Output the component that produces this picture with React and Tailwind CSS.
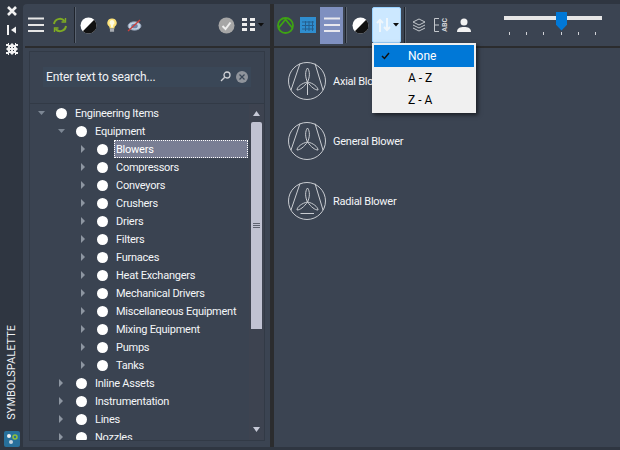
import React from 'react';

const font = { fontFamily: 'Roboto, "Open Sans", sans-serif' };

const children = ['Blowers', 'Compressors', 'Conveyors', 'Crushers', 'Driers', 'Filters', 'Furnaces', 'Heat Exchangers', 'Mechanical Drivers', 'Miscellaneous Equipment', 'Mixing Equipment', 'Pumps', 'Tanks'];
const siblings = ['Inline Assets', 'Instrumentation', 'Lines', 'Nozzles'];
const ticks = [0, 1, 2, 3, 4, 5];

function Arrow({ open }) {
    return open ? (
        <svg width="8" height="6" viewBox="0 0 8 6" className="shrink-0"><path d="M0 1h7L3.500 5z" fill="#7d8794" /></svg>
    ) : (
        <svg width="6" height="8" viewBox="0 0 6 8" className="shrink-0"><path d="M1 0v8l4-4z" fill="#8d96a1" /></svg>
    );
}

function TreeRow({ indent, label, open, selected }) {
    const pad = indent === 0 ? 'pl-[8px]' : indent === 1 ? 'pl-[28px]' : 'pl-[50px]';
    const gap = indent === 2 ? 'ml-[11px]' : open ? 'ml-[10px]' : 'ml-[12px]';
    return (
        <div className={`h-[18px] flex items-center shrink-0 ${pad}`}>
            <Arrow open={open} />
            <div className={`w-[11px] h-[11px] rounded-full bg-white shrink-0 ${gap}`}></div>
            {selected ? (
                <div className="ml-[6px] w-[134px] h-[18px] shrink-0 bg-[#797e94] border border-dotted border-white text-white text-[11px] tracking-[-0.25px] leading-[18px] pl-[1px]">{label}</div>
            ) : (
                <div className="ml-[8px] pt-[2px] text-[#f4f6f8] text-[11px] tracking-[-0.25px] leading-[18px] whitespace-nowrap">{label}</div>
            )}
        </div>
    );
}

function Hamburger({ color = '#e6e6e6' }) {
    return (
        <svg width="16" height="16" viewBox="0 0 16 16"><path d="M0 1.500h16M0 8h16M0 14h16" stroke={color} strokeWidth="2" /></svg>
    );
}

function HalfCircle() {
    return (
        <svg width="17" height="17" viewBox="0 0 17 17"><circle cx="8.500" cy="8.500" r="8" fill="#ffffff" /><path d="M14.200 2.800A8 8 0 0 1 2.800 14.200z" fill="#111111" /></svg>
    );
}

function Blower({ variant }) {
    return (
        <svg width="38" height="38" viewBox="0 0 38 38" className="shrink-0" fill="none" stroke="#c9ccd1" strokeWidth="1">
            <circle cx="19" cy="19" r="18.500" />
            <path d="M12 1.500L3 28M27 1.500L35 28" />
            <path d="M19.500 20C17 15 17 9 19.500 6C22 9 22 15 19.500 20Z" />
            <path d="M19.500 20C16 25 12 28 9 28C9 25 14 21 19.500 20Z" />
            <path d="M19.500 20C23 25 27 28 30 28C30 25 25 21 19.500 20Z" />
            {variant === 'axial' && <path d="M19.500 21V33" />}
            {variant === 'radial' && <path d="M12.500 31.500H26" />}
        </svg>
    );
}

function BlowerRow({ label, variant }) {
    return (
        <div className="h-[60px] flex items-center">
            <Blower variant={variant} />
            <span className="ml-[7px] pt-[2px] text-[11px] tracking-[-0.25px] text-[#f4f6f8] whitespace-nowrap">{label}</span>
        </div>
    );
}

function Separator({ className }) {
    return <div className={`w-[2px] h-[36px] bg-[#1f242c] border-r border-[#59626f] shrink-0 ${className}`}></div>;
}

function SortMenu() {
    return (
        <div className="absolute left-[372px] top-[43px] w-[104px] h-[70px] bg-[#f0f0f0] p-[2px] shadow-[2px_2px_4px_rgba(0,0,0,0.55)] z-10 text-[12px] text-black">
            <div className="h-[22px] bg-[#0078d7] flex items-center text-white">
                <svg width="10" height="8" viewBox="0 0 10 8" className="ml-[7px]"><path d="M1 4l2.500 2.500L8 1" fill="none" stroke="#111" strokeWidth="1.500" /></svg>
                <span className="ml-[17px]">None</span>
            </div>
            <div className="h-[22px] flex items-center pl-[34px]">A - Z</div>
            <div className="h-[22px] flex items-center pl-[34px]">Z - A</div>
        </div>
    );
}

function LeftToolbar() {
    return (
        <div className="h-[42px] flex items-center shrink-0 pl-[5px]">
            <Hamburger />
            <svg width="16" height="16" viewBox="0 0 16 16" className="ml-[8px]" fill="none" stroke="#7eaa24" strokeWidth="2">
                <path d="M2 7a6 6 0 0 1 10.500-3M14 9a6 6 0 0 1-10.500 3" />
                <path d="M13.500 1v4h-4M2.500 15v-4h4" strokeWidth="1.400" />
            </svg>
            <Separator className="ml-[6px]" />
            <div className="ml-[4px]"><HalfCircle /></div>
            <svg width="10" height="15" viewBox="0 0 12 17" className="ml-[10px]">
                <path d="M6 0a5.500 5.500 0 0 0-3 10.200V12h6v-1.800A5.500 5.500 0 0 0 6 0z" fill="#fce27a" />
                <path d="M6 2a3 3 0 0 0-1.500 5.600L5 11h2l.5-3.400A3 3 0 0 0 6 2z" fill="#fffbe0" />
                <rect x="3.500" y="12" width="5" height="4" fill="#a9adb3" />
            </svg>
            <svg width="15" height="13" viewBox="0 0 16 14" className="ml-[10px]">
                <ellipse cx="8" cy="7.500" rx="7" ry="4.500" fill="#c4d3e4" stroke="#8c9bb0" />
                <ellipse cx="8" cy="7.500" rx="3.500" ry="2.500" fill="#6f83a8" />
                <path d="M1 13L14 1" stroke="#c9403c" strokeWidth="1.400" />
            </svg>
            <svg width="17" height="17" viewBox="0 0 17 17" className="ml-[76px]">
                <circle cx="8.500" cy="8.500" r="8" fill="#a6a6a6" />
                <path d="M4.500 9l3 3 5-6.500" fill="none" stroke="#eeeeee" strokeWidth="2" />
            </svg>
            <svg width="13" height="14" viewBox="0 0 13 14" className="ml-[7px]" fill="#eeeeee">
                <rect x="0" y="0" width="5" height="3" /><rect x="8" y="0" width="5" height="3" />
                <rect x="0" y="5" width="5" height="3" /><rect x="8" y="5" width="5" height="3" />
                <rect x="0" y="10" width="5" height="3" /><rect x="8" y="10" width="5" height="3" />
            </svg>
            <svg width="6" height="4" viewBox="0 0 6 4" className="ml-[3px]"><path d="M0 0h6L3 3.500z" fill="#0f0f0f" /></svg>
        </div>
    );
}

function RightToolbar() {
    return (
        <div className="h-[42px] flex items-center shrink-0 pl-[3px]">
            <svg width="17" height="17" viewBox="0 0 17 17" fill="none" stroke="#3ea313" strokeWidth="1.800">
                <circle cx="8.500" cy="8.500" r="7.500" />
                <path d="M1.500 11L8.500 2.500L15.500 11" />
            </svg>
            <svg width="16" height="16" viewBox="0 0 16 16" className="ml-[6px]">
                <rect width="16" height="16" fill="#2f8ecf" />
                <path d="M2 5h12M2 8.500h12M2 12h12M5.500 4v10M9 4v10M12.500 4v10" stroke="#255f8f" strokeWidth="1" />
            </svg>
            <div className="ml-[4px] w-[23px] h-[37px] bg-[#7f90c0] flex items-center justify-center"><Hamburger color="#e8e8ee" /></div>
            <Separator className="ml-[2px]" />
            <div className="ml-[5px]"><HalfCircle /></div>
            <div className="ml-[3px] w-[29px] h-[36px] bg-[#cce8ff] border border-[#99d1ff] rounded-[2px] flex items-center pl-[3px]">
                <svg width="15" height="14" viewBox="0 0 15 14" fill="none" stroke="#eef6fc" strokeWidth="2">
                    <path d="M4 14V2M1 5l3-3 3 3M11 0v12M8 9l3 3 3-3" />
                </svg>
                <svg width="6" height="4" viewBox="0 0 6 4" className="ml-[2px]"><path d="M0 0h6L3 3.500z" fill="#0f0f0f" /></svg>
            </div>
            <Separator className="ml-[3px]" />
            <svg width="14" height="14" viewBox="0 0 14 14" className="ml-[6px]" fill="none" stroke="#c4c8cd">
                <path d="M7 1l6 3-6 3-6-3zM1 7l6 3 6-3M1 10l6 3 6-3" />
            </svg>
            <div className="ml-[8px] w-[15px] h-[17px] flex items-center">
                <svg width="6" height="14" viewBox="0 0 6 14" fill="none" stroke="#c4c8cd"><path d="M5 .5H.5v13H5M.5 7H5" /></svg>
                <span className="text-[7px] leading-[8px] text-[#d4d6da] [writing-mode:vertical-rl] rotate-180 font-bold ml-[1px]">ABC</span>
            </div>
            <svg width="14" height="14" viewBox="0 0 14 14" className="ml-[8px]" fill="#f2f2f2">
                <circle cx="7" cy="4" r="3.500" />
                <path d="M0 14c0-4 3-5 7-5s7 1 7 5z" />
            </svg>
            <div className="relative ml-[33px] w-[98px] h-[24px] -mt-[3px]">
                <div className="absolute left-0 top-[4px] w-[98px] h-[4px] bg-[#e6e6e6]"></div>
                <div className="absolute left-[52px] top-0 w-[11px] h-[19px] bg-[#0078d7] [clip-path:polygon(0_0,100%_0,100%_70%,50%_100%,0_70%)]"></div>
                <div className="absolute left-[5px] right-[6px] top-[20px] flex justify-between">
                    {ticks.map((t) => <div key={t} className="w-px h-[3px] bg-[#d0d2d6]"></div>)}
                </div>
            </div>
        </div>
    );
}

export default function App() {
    return (
        <div className="w-[620px] h-[450px] bg-[#2f3641] flex overflow-hidden relative" style={font}>
            <div className="w-[23px] shrink-0 flex flex-col items-center pt-[5px] pb-[3px]">
                <svg width="12" height="12" viewBox="0 0 12 12"><path d="M2 2l8 8M10 2l-8 8" stroke="#f2f2f2" strokeWidth="2.600" /></svg>
                <svg width="10" height="10" viewBox="0 0 10 10" className="mt-[8px]"><path d="M1 0v10" stroke="#f2f2f2" strokeWidth="2" /><path d="M9 1.500v7L4 5z" fill="#f2f2f2" /></svg>
                <svg width="12" height="12" viewBox="0 0 12 12" className="mt-[8px]" fill="#f2f2f2">
                    <rect x="2" y="2" width="8" height="8" />
                    <path d="M6 0l2 2H4zM6 12l2-2H4zM0 6l2 2V4zM12 6l-2 2V4z" />
                    <path d="M0 1h2V0h1v3H0zM12 1h-2V0H9v3h3zM0 11h2v1h1V9H0zM12 11h-2v1H9V9h3z" />
                    <path d="M4 4h1v1H4zM7 4h1v1H7zM4 7h1v1H4zM7 7h1v1H7z" fill="#2f3641" />
                </svg>
                <div className="flex-1"></div>
                <div className="text-[11px] leading-[14px] text-[#eef0f3] [writing-mode:vertical-rl] rotate-180 mb-[11px]">SYMBOLSPALETTE</div>
                <div className="w-[16px] h-[16px] bg-[#27709b] rounded-[2px] flex items-center justify-center">
                    <svg width="12" height="12" viewBox="0 0 12 12">
                        <circle cx="3" cy="3" r="2" fill="#f0f0f0" />
                        <circle cx="9" cy="4" r="2" fill="none" stroke="#8fc03c" strokeWidth="1.500" />
                        <circle cx="5" cy="9" r="2" fill="#c4d4e0" />
                    </svg>
                </div>
            </div>

            <div className="flex-1 mt-[4px] mb-[3px] rounded-tl-[4px] bg-[#3b4452] flex min-w-0 relative">
                <div className="w-[247px] shrink-0 flex flex-col">
                    <LeftToolbar />
                    <div className="h-[2px] ml-[2px] bg-[#2b2c2e] shrink-0"></div>
                    <div className="flex-1 min-h-0 ml-[6px] mr-[5px] mt-[3px] mb-[6px] border border-[#323a46] bg-[#3a4351] flex flex-col">
                        <div className="h-[52px] shrink-0 flex items-center px-[13px] border-b border-[#323a46]">
                            <div className="w-[209px] h-[20px] -mt-[2px] bg-[#3a4757] flex items-center pl-[3px] pr-[3px]">
                                <span className="text-[#f0f2f5] text-[12px] tracking-[-0.15px] flex-1">Enter text to search...</span>
                                <svg width="11" height="11" viewBox="0 0 11 11" fill="none" stroke="#d0d2d6" strokeWidth="1.300"><circle cx="7" cy="4" r="3" /><path d="M4.700 6.300L1 10" /></svg>
                                <svg width="12" height="12" viewBox="0 0 12 12" className="ml-[5px]"><circle cx="6" cy="6" r="6" fill="#8f949b" /><path d="M3.500 3.500l5 5M8.500 3.500l-5 5" stroke="#3a4757" strokeWidth="1.200" /></svg>
                            </div>
                        </div>
                        <div className="flex-1 min-h-0 flex overflow-hidden">
                            <div className="flex-1 min-w-0 flex flex-col overflow-hidden">
                                <TreeRow indent={0} label="Engineering Items" open />
                                <TreeRow indent={1} label="Equipment" open />
                                {children.map((c, i) => <TreeRow key={c} indent={2} label={c} selected={i === 0} />)}
                                {siblings.map((c) => <TreeRow key={c} indent={1} label={c} />)}
                            </div>
                            <div className="w-[15px] shrink-0 bg-[#3d4350] flex flex-col items-center relative">
                                <svg width="7" height="6" viewBox="0 0 7 6" className="mt-[7px]"><path d="M3.500 0L7 5H0z" fill="#c6c9d6" /></svg>
                                <div className="w-[11px] h-[207px] mt-[5px] bg-[#c0c2d2] rounded-t-[2px] flex items-center justify-center">
                                    <svg width="7" height="5" viewBox="0 0 7 5"><path d="M0 .5h7M0 2.500h7M0 4.500h7" stroke="#5d6270" /></svg>
                                </div>
                                <div className="flex-1"></div>
                                <svg width="7" height="6" viewBox="0 0 7 6" className="mb-[7px]"><path d="M0 0h7L3.500 5z" fill="#c6c9d6" /></svg>
                            </div>
                        </div>
                    </div>
                </div>
                <div className="w-[4px] shrink-0 bg-[#2b2c2e]"></div>
                <div className="flex-1 min-w-0 flex flex-col">
                    <RightToolbar />
                    <div className="h-[2px] bg-[#2b2c2e] shrink-0"></div>
                    <div className="pl-[14px] pt-[3px]">
                        <BlowerRow label="Axial Blower" variant="axial" />
                        <BlowerRow label="General Blower" />
                        <BlowerRow label="Radial Blower" variant="radial" />
                    </div>
                </div>
            </div>
            <SortMenu />
        </div>
    );
}
